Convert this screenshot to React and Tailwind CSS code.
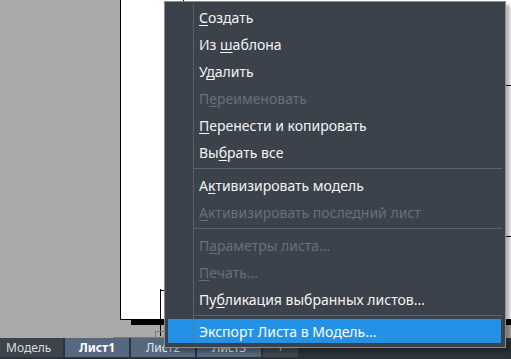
import React from 'react';

const items = [
  { pre: '', u: 'С', post: 'оздать' },
  { pre: 'Из ', u: 'ш', post: 'аблона' },
  { pre: 'У', u: 'д', post: 'алить' },
  { pre: 'П', u: 'е', post: 'реименовать', off: true },
  { pre: '', u: 'П', post: 'еренести и копировать' },
  { pre: 'Вы', u: 'б', post: 'рать все' },
  'sep',
  { pre: 'А', u: 'к', post: 'тивизировать модель' },
  { pre: '', u: 'А', post: 'ктивизировать последний лист', off: true },
  'sep',
  { pre: 'П', u: 'а', post: 'раметры листа...', off: true },
  { pre: '', u: 'П', post: 'ечать...', off: true },
  { pre: 'Пу', u: 'б', post: 'ликация выбранных листов...' },
  'sep',
];

function MenuRow({ item }) {
  return (
    <div className="flex h-[27px] items-center">
      <div className="h-full w-[29px] shrink-0 border-r border-[#5a6169]" />
      <span className={`pl-[5px] ${item.off ? 'text-[#68707b]' : 'text-[#f4f4f4]'}`}>
        {item.pre}
        <span className="underline underline-offset-[2px]">{item.u}</span>
        {item.post}
      </span>
    </div>
  );
}

export default function App() {
  return (
    <div className="relative h-[359px] w-[511px] overflow-hidden bg-[#aaaaaa] font-['Noto_Sans',sans-serif]">
      {/* лист */}
      <div className="flex h-[338px] flex-col">
        <div className="ml-[120px] h-[320px] shrink-0 border-b border-l border-black bg-white" />
        <div className="ml-[131px] h-[5px] shrink-0 bg-black" />
        <div className="flex-1" />
        <div className="ml-[113px] h-px w-[55px] bg-[#7c7c7c]" />
      </div>

      {/* метки на листе */}
      <div className="absolute left-[160px] top-[289px] h-[47px] w-px bg-black" />
      <div className="absolute left-[160px] top-[290px] h-px w-[5px] bg-black" />
      <div className="absolute left-[183px] top-0 h-[2px] w-px bg-black" />
      <div className="absolute left-[506px] top-[85px] h-px w-[5px] bg-black" />
      <div className="absolute left-[506px] top-[236px] h-px w-[5px] bg-black" />
      <div className="absolute left-[155px] top-[331px] h-[6px] w-[9px] border-l border-t border-[#7c7c7c]" />

      {/* вкладки */}
      <div className="flex h-[21px] gap-[2px] bg-[#2c3239] text-[12px] leading-[19px]">
        <div className="h-[19px] w-[63px] bg-[#3b434c] pl-[6px] text-[#dcdcdc]">Модель</div>
        <div className="h-[19px] w-[64px] bg-[#56687f] text-center font-bold text-white">Лист1</div>
        <div className="h-[19px] w-[64px] bg-[#56687f] text-center text-[#e8e8e8]">Лист2</div>
        <div className="h-[19px] w-[64px] bg-[#56687f] text-center text-[#e8e8e8]">Лист3</div>
        <div className="h-[19px] w-[35px] bg-[#40474f] text-center text-[#dcdcdc]">+</div>
      </div>

      {/* контекстное меню */}
      <div className="absolute left-[164px] top-px w-[342px] border border-[#8d8d8d] bg-[#3b424b] pb-[4px] pt-[2px] text-[14px] shadow-[4px_4px_3px_rgba(0,0,0,0.28)]">
        {items.map((it, i) =>
          it === 'sep' ? (
            <div key={i} className="flex h-[6px]">
              <div className="h-full w-[29px] shrink-0 border-r border-[#5a6169]" />
              <div className="mt-[2px] h-px w-[308px] bg-[#5c636c]" />
            </div>
          ) : (
            <MenuRow key={i} item={it} />
          )
        )}
        <div className="ml-[3px] mr-[4px] flex h-[24px] items-center bg-[#2391e6]">
          <div className="h-full w-[26px] shrink-0 border-r border-[#3a7fb8]" />
          <span className="pl-[5px] pt-px text-white">Экспорт Листа в Модель...</span>
        </div>
      </div>
    </div>
  );
}
